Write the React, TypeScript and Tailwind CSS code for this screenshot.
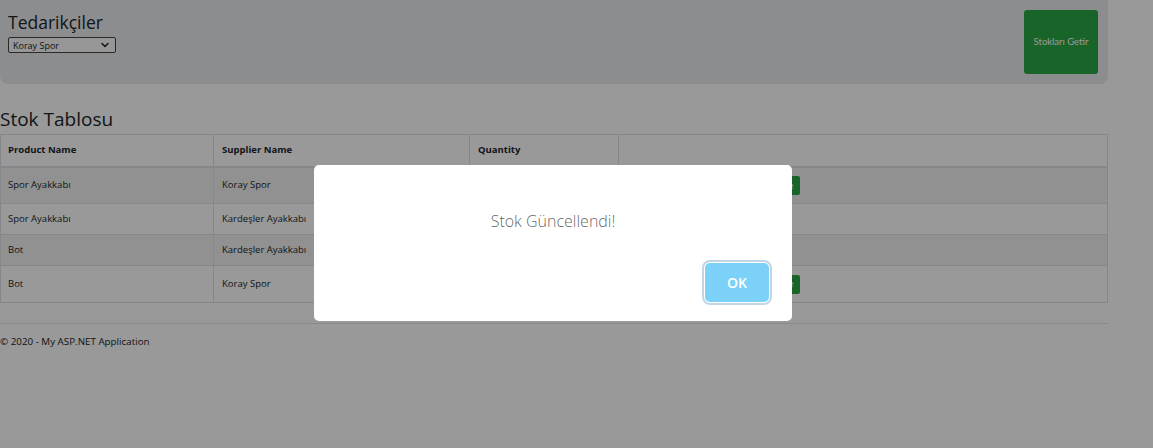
import { ChevronDown } from "lucide-react";

type StockRow = {
	product: string;
	supplier: string;
	quantity: number;
	editable: boolean;
};

const rows: StockRow[] = [
	{ product: "Spor Ayakkabı", supplier: "Koray Spor", quantity: 12, editable: true },
	{ product: "Spor Ayakkabı", supplier: "Kardeşler Ayakkabı", quantity: 8, editable: false },
	{ product: "Bot", supplier: "Kardeşler Ayakkabı", quantity: 5, editable: false },
	{ product: "Bot", supplier: "Koray Spor", quantity: 20, editable: true },
];

export default function App() {
	return (
		<div className="relative w-[1153px] h-[448px] overflow-hidden bg-white text-[#212529] font-['Open_Sans',sans-serif]">
			<div className="w-[1108px]">
				{/* Jumbotron */}
				<div className="h-[84px] bg-[#e9ecef] rounded-b-lg flex justify-between pl-2 pr-[10px] pt-[10px]">
					<div>
						<h1 className="text-[17.5px] leading-[24px] font-medium">Tedarikçiler</h1>
						<div className="mt-[3px] w-[108px] h-[16px] border border-[#444] rounded-[2px] bg-[#fafafa] flex items-center justify-between pl-1 pr-1">
							<span className="text-[9px] leading-none">Koray Spor</span>
							<ChevronDown className="w-3 h-3" strokeWidth={3} />
						</div>
					</div>
					<button className="w-[74px] h-[64px] bg-[#28a745] rounded-[3px] text-white text-[9.5px] font-['Lato',sans-serif]">
						Stokları Getir
					</button>
				</div>

				{/* Stock table */}
				<h2 className="mt-[20px] text-[19px] leading-[30px] font-medium">Stok Tablosu</h2>
				<table className="w-full border-collapse border border-[#dee2e6] text-[9.5px]">
					<thead>
						<tr className="h-[32px]">
							<th className="w-[213px] text-left font-bold px-[7px] border border-[#dee2e6] border-b-2">Product Name</th>
							<th className="w-[256px] text-left font-bold px-[8px] border border-[#dee2e6] border-b-2">Supplier Name</th>
							<th className="w-[149px] text-left font-bold px-[8px] border border-[#dee2e6] border-b-2">Quantity</th>
							<th className="border border-[#dee2e6] border-b-2"></th>
						</tr>
					</thead>
					<tbody>
						{rows.map((row, i) => (
							<tr key={i} className={`${row.editable ? "h-[37px]" : "h-[31px]"} ${i % 2 === 0 ? "bg-black/5" : ""}`}>
								<td className="px-[7px] border border-[#dee2e6]">{row.product}</td>
								<td className="px-[8px] border border-[#dee2e6]">{row.supplier}</td>
								<td className="px-[8px] border border-[#dee2e6]">{row.quantity}</td>
								<td className="px-[8px] border border-[#dee2e6]">
									{row.editable && (
										<div className="flex items-center gap-1">
											<div className="w-[120px] h-[19px] border border-[#ced4da] rounded-[2px] bg-white"></div>
											<button className="h-[19px] px-1.5 bg-[#28a745] rounded-[2px] text-white text-[9px]">Güncelle</button>
										</div>
									)}
								</td>
							</tr>
						))}
					</tbody>
				</table>

				{/* Footer */}
				<hr className="mt-[20px] border-t border-[#e5e5e5]" />
				<footer className="mt-[11px] text-[9.8px]">© 2020 - My ASP.NET Application</footer>
			</div>

			{/* Alert overlay */}
			<div className="absolute inset-0 bg-black/40"></div>
			<div className="absolute left-[314px] top-[165px] w-[478px] h-[156px] bg-white rounded-[5px] flex flex-col">
				<p className="mt-[45px] text-center text-[16px] leading-[22px] text-black/65 font-light">Stok Güncellendi!</p>
				<div className="mt-auto flex justify-end pr-[23px] pb-[19px]">
					<button className="w-[64px] h-[39px] rounded-[5px] bg-[#7cd1f9] text-white text-[14px] font-semibold shadow-[0_0_0_1px_#fff,0_0_0_3px_rgba(43,114,165,0.29)]">
						OK
					</button>
				</div>
			</div>
		</div>
	);
}
